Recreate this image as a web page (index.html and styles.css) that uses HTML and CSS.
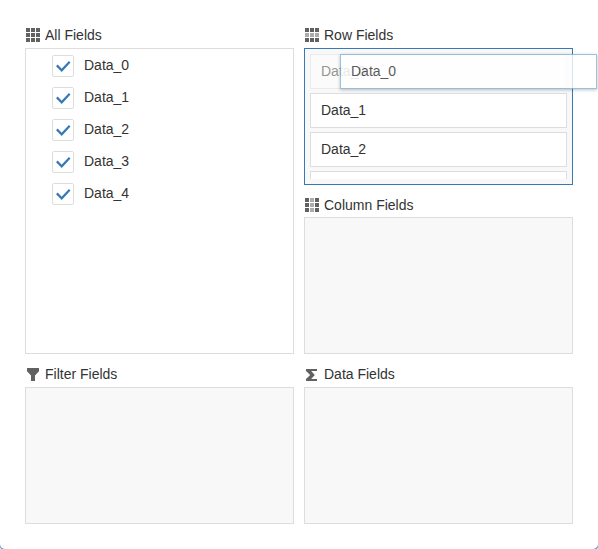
FILE: index.html
```
<!DOCTYPE html>
<html lang="en">
<head>
<meta charset="utf-8">
<title>Field List</title>
<link rel="stylesheet" href="styles.css">
</head>
<body>
<main class="dialog">
  <div class="columns">
    <section class="area all">
      <h2 class="head"><svg class="icon" viewBox="0 0 14 14" shape-rendering="crispEdges"><path d="M0 0h4v4H0zM5 0h4v4H5zM10 0h4v4h-4zM0 5h4v4H0zM5 5h4v4H5zM10 5h4v4h-4zM0 10h4v4H0zM5 10h4v4H5zM10 10h4v4h-4z"/></svg>All Fields</h2>
      <ul class="box tree">
        <li><span class="check"><svg viewBox="0 0 20 20"><path d="M3.8 9.4l4.9 4.9 8-8.6"/></svg></span>Data_0</li>
        <li><span class="check"><svg viewBox="0 0 20 20"><path d="M3.8 9.4l4.9 4.9 8-8.6"/></svg></span>Data_1</li>
        <li><span class="check"><svg viewBox="0 0 20 20"><path d="M3.8 9.4l4.9 4.9 8-8.6"/></svg></span>Data_2</li>
        <li><span class="check"><svg viewBox="0 0 20 20"><path d="M3.8 9.4l4.9 4.9 8-8.6"/></svg></span>Data_3</li>
        <li><span class="check"><svg viewBox="0 0 20 20"><path d="M3.8 9.4l4.9 4.9 8-8.6"/></svg></span>Data_4</li>
      </ul>
    </section>
    <section class="area">
      <h2 class="head"><svg class="icon" viewBox="0 0 14 14" shape-rendering="crispEdges"><path d="M0 0h4v4H0zM5 0h4v4H5zM10 0h4v4h-4zM0 10h4v4H0zM5 10h4v4H5zM10 10h4v4h-4z"/><path class="dim" d="M0 5h4v4H0zM5 5h4v4H5zM10 5h4v4h-4z"/></svg>Row Fields</h2>
      <div class="box drop active">
        <ul class="list">
          <li class="field source">Data_0</li>
          <li class="field">Data_1</li>
          <li class="field">Data_2</li>
          <li class="field"></li>
        </ul>
      </div>
    </section>
    <section class="area">
      <h2 class="head tight"><svg class="icon" viewBox="0 0 14 14" shape-rendering="crispEdges"><path d="M0 0h4v4H0zM10 0h4v4h-4zM0 5h4v4H0zM10 5h4v4h-4zM0 10h4v4H0zM10 10h4v4h-4z"/><path class="dim" d="M5 0h4v4H5zM5 5h4v4H5zM5 10h4v4H5z"/></svg>Column Fields</h2>
      <div class="box drop"></div>
    </section>
    <section class="area">
      <h2 class="head"><svg class="icon" viewBox="0 0 14 14"><path d="M1 1h12v3.2L9 8.6V14H5V8.6L1 4.2z"/></svg>Filter Fields</h2>
      <div class="box drop"></div>
    </section>
    <section class="area">
      <h2 class="head"><svg class="icon" viewBox="0 0 14 14"><path d="M1 2h11v2H6.2L9.8 8l-3.6 4H12v2H1v-2.1L5.2 8 1 4.1z"/></svg>Data Fields</h2>
      <div class="box drop"></div>
    </section>
  </div>
</main>
<div class="field ghost">Data_0</div>
</body>
</html>
```
FILE: styles.css
```
* { box-sizing: border-box; }
html { overflow: hidden; background: #fff; }
body {
  margin: 0;
  height: 549px;
  overflow: hidden;
  font: 14px/20px "Liberation Sans", Arial, sans-serif;
  color: #333;
}
ul { margin: 0; padding: 0; list-style: none; }
.dialog {
  height: 550px;
  margin: 0 -1px;
  padding: 25px;
  border: 1px solid #5b9bd0;
  border-top: 0;
  border-radius: 0 0 6px 6px;
}
.columns {
  display: grid;
  grid-template-columns: 269px 269px;
  grid-template-rows: 160px 169px 170px;
  column-gap: 10px;
}
.area { display: flex; flex-direction: column; justify-content: flex-end; }
.all { grid-row: span 2; }
.area.all { justify-content: flex-start; }
.head {
  display: flex;
  align-items: center;
  margin: 0 0 3px;
  padding-left: 1px;
  font-size: 14px;
  font-weight: 400;
  line-height: 20px;
}
.tight { margin-bottom: 2px; }
.icon { width: 14px; height: 14px; margin-right: 5px; fill: #616161; }
.dim { fill: #acacac; }
.box { border: 1px solid #ddd; background: #fff; }
.tree { height: 306px; padding: 1px 26px; }
.tree li { display: flex; height: 32px; padding-top: 5px; line-height: 20px; }
.check {
  width: 22px;
  height: 22px;
  margin-right: 10px;
  border: 1px solid #ddd;
  border-radius: 2px;
}
.check svg { display: block; width: 20px; height: 20px; }
.check path { fill: none; stroke: #337ab7; stroke-width: 2.2; }
.drop { height: 137px; padding: 5px; background: #f8f8f8; }
.active { border-color: #337ab7; }
.list { height: 125px; overflow: hidden; }
.field {
  height: 35px;
  margin-bottom: 4px;
  padding: 6px 10px;
  border: 1px solid #ddd;
  background: #fff;
  line-height: 21px;
}
.source { opacity: .5; }
.ghost {
  position: absolute;
  left: 340px;
  top: 54px;
  width: 257px;
  margin: 0;
  border-color: #7fb2db;
  box-shadow: 0 1px 3px rgba(0, 0, 0, .3);
  opacity: .8;
}
```
